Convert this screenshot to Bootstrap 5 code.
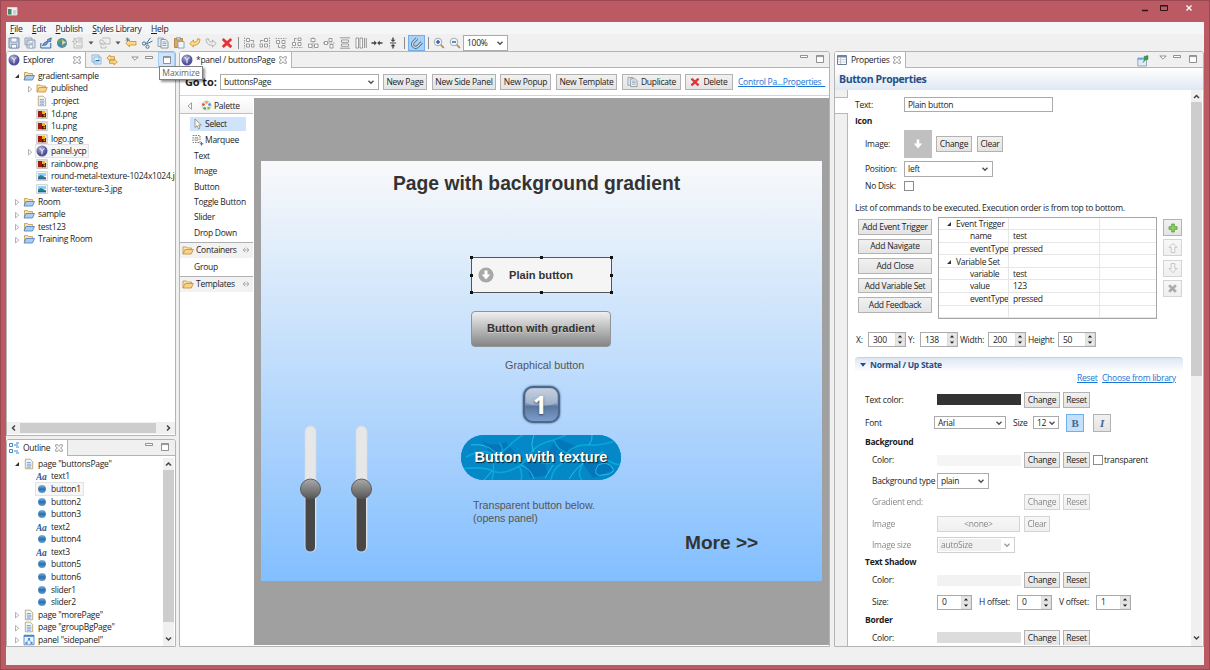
<!DOCTYPE html>
<html lang="en">
<head>
<meta charset="utf-8">
<title>Panel editor</title>
<link rel="stylesheet" href="https://cdn.jsdelivr.net/npm/bootstrap@5.3.0/dist/css/bootstrap.min.css">
<style>
body{width:1210px;height:670px;overflow:hidden;background:#bc5a64;font:8.5px/12px "Open Sans","Noto Sans",sans-serif;letter-spacing:-.26px;color:#1c1c1c;white-space:nowrap}
svg{display:block;flex:none}
.ic{width:12px;height:12px}
.win{width:1210px;height:670px;border:1px solid #9a4852;padding:0 5px 4px}
.titlebar{height:21px}
.menubar{height:12px;background:#f5f6f7;padding:1px 0 0 4px}
.menubar span{margin-right:9.5px}
.menubar u,.lnk{text-underline-offset:1px}
.tools{height:17px;background:#f0f0f0}
.tools .tb{width:16px;height:16px;display:flex;align-items:center;justify-content:center}
.tools .dd{width:10px;display:flex;justify-content:center}
.tools .sep{width:6px;height:12px;display:flex;justify-content:center}
.tools .sep::before{content:"";width:1px;background:#8c8c8c}
.tools .pressed{width:17px;background:#a9d0f5;border:1px solid #74aee6}
.gap1{width:1px}
.dim{opacity:.75}
.main-area{background:#f0f0f0;height:614px}
.leftcol{width:170px;margin-right:3px;flex:none}
.pane{background:#fff;border:1px solid #b4b4b4;border-radius:3px 3px 0 0;overflow:hidden;flex:none}
.explorer{height:385px;margin-bottom:3px}
.outline-pane{height:208px}
.editor{width:651px;height:596px;margin-right:4px}
.props{width:370px;height:596px}
.tabs{height:16px;background:#f0f0f0;border-bottom:1px solid #b4b4b4}
.tabon{height:16px;background:#fff;border-right:1px solid #b4b4b4;padding:0 4px 0 1px}
.w-exp{width:79px}.w-out{width:61px}.w-ed{width:112px}.w-pr{width:71px}
.hot{width:17px;height:16px;background:#cfe4fa;border:1px solid #a5cdf2}
.treearea{height:354px;padding-top:1.5px}
.treerow{height:12.58px;display:flex;align-items:center}
.treerow>.tw{width:8px;margin:1px 2.5px 0 5.5px;flex:none}
.treerow .ic{margin-right:3px}
.lv1{padding-left:13px}
.treerow .cur{background:#f6f6f6;outline:1px solid #e4e4e4;display:flex;align-items:center;height:12px;padding-right:2px}
.hsb{height:12px;background:#f0f0f0}
.hthumb{width:136px;height:10px;background:#cdcdcd}
.vsb{width:11px;background:#f0f0f0}
.vthumb{width:11px;background:#cdcdcd}
.ot{height:152px}.pt{height:274px}
.btnx{background:linear-gradient(#f1f1f1,#e4e4e4);border:1px solid #b2b2b2;display:flex;align-items:center;justify-content:center;height:16px;line-height:12px;flex:none}
.off{opacity:.55}
.fld{background:#fff;border:1px solid #ababab;height:16px;display:flex;align-items:center;padding:0 3px}
.lnk{color:#1a74d4;text-decoration:underline}
.gotorow{height:28px;border-bottom:1px solid #d4d4d4;padding-left:5px}
.goto{width:35px;font:bold 11px/14px "Open Sans",sans-serif;letter-spacing:-.1px}
.palette{width:73px;margin-top:2px}
.palhead{height:16px;border-bottom:1px solid #c0c0c0;background:linear-gradient(#fff,#f2f2f2)}
.palitem{height:15.45px;padding-left:14px;display:flex;align-items:center}
.palsel{height:14px;width:56px;margin:3px 0 1px 10px;background:#cfe3fa}
.drawer{height:16px;border-top:1px solid #b0b0b0;background:#f2f2f2;padding:0 3px 0 2px}
.canvas{width:575px;height:547px;margin:2px 0 0 1px;background:#a0a0a0;padding:63px 7px}
.sheet{position:relative;width:561px;height:420px;background:linear-gradient(#f9f9fa 0,#d3e7fb 32%,#a9d1fd 68%,#82bfff);color:#333;font-family:"Liberation Sans",sans-serif;letter-spacing:0}
.sheet>*{position:absolute}
.s-title{left:132px;top:11px;font:bold 19.3px/24px "Liberation Sans",sans-serif}
.s-plain{left:210px;top:96px;width:141px;height:36px;background:#f5f5f5;border:1px solid #555}
.s-handles{left:207px;top:93px}
.s-plabel{left:248px;top:107px}
.blabel{font:bold 11.1px/14px "Liberation Sans",sans-serif}
.s-grad{left:210px;top:150px;width:140px;height:36px;border:1px solid #8f9499;border-radius:4px;background:linear-gradient(#efefef,#858585);text-shadow:0 1px #ccc;padding-bottom:2px}
.s-cap{left:244px;top:198px;font-size:10.8px;line-height:13px;color:#555}
.s-one{left:261px;top:224px;width:39px;height:39px}
.s-one svg{filter:drop-shadow(0 0 1px #40587c)}
.s-one b{position:absolute;inset:0;font:bold 25px/38px "Noto Sans",sans-serif;color:#fff;text-align:center;left:-3px;text-shadow:0 1px 2px #345}
.s-tex{left:200px;top:274px;width:160px;height:45px;border-radius:23px;overflow:hidden;background:#0788c6}
.s-tex span{position:absolute;left:0;right:0;top:14px;text-align:center;font:bold 14.6px/17px "Liberation Sans",sans-serif;color:#fff;text-shadow:1px 1px 1px #023}
.s-note{left:212px;top:338px;font-size:10.7px;line-height:12.7px;color:#555;letter-spacing:-.05px}
.s-more{left:424px;top:370px;font:bold 19.1px/24px "Liberation Sans",sans-serif}
.s-sl{left:38px;top:264px}
.ptitle{height:22px;background:linear-gradient(#fff,#dfe8f3);color:#1f4f85;font:bold 10.5px/23px "Open Sans",sans-serif;letter-spacing:-.38px;padding-left:4px}
.formwrap{height:556px}
.sidetab{width:13px;background:#f0f0f0;border-right:1px solid #b8b8b8}
.sidetab div{height:17px;margin:7px -1px 0 0;background:#fff;border:solid #b8b8b8;border-width:1px 0}
.form-area{display:grid;width:343px;height:555px;overflow:hidden;padding-top:6px;grid-template-rows:17px 16px 29px 22px 12px 25px 102px 38px 14px 13px 31px 15px 23px 14px 28px 14px 29px 13px 22px 14px 30px 5px 31px}
.f{display:grid;align-items:center;align-content:center;padding-left:7px;min-height:0}
.g-text{grid-template-columns:49px 149px}
.g-text .fld,.spin{height:15px}
.g-img{grid-template-columns:39px 28px 4px 36px 5px 26px;padding-left:17px}
.g-img .thumb{height:28px;background:#c0c0c0;display:flex;align-items:center;justify-content:center}
.g-pos{grid-template-columns:39px 89px;padding-left:17px}
.g-list{padding-top:7px}
.chk{width:10px;height:10px;border:1px solid #8c8c8c;background:#fff}
.g-cmd{grid-template-columns:74px 6px 219px 6px 19px;align-items:start;align-content:start;padding-left:10px}
.cmdbtn{margin:2px 0 4px;height:15.6px}
.cmdtable{height:102px;border:1px solid #a6a6a6;overflow:hidden;margin-top:-.5px}
.cmdline{display:grid;grid-template-columns:70px 91px 1fr;height:12.6px;border-bottom:1px solid #e6e6e6;align-items:center}
.cmdline>*{border-right:1px solid #e6e6e6;height:12.6px;padding-left:4px;overflow:hidden}
.cmdline>*:first-child{padding-left:31px}
.cmdline>.grp:first-child{display:flex;align-items:center;padding-left:6px;gap:3px}
.sq{width:19px;height:17px;margin:2px 0 3.3px}
.g-xy{grid-template-columns:12px 38px 2px 12px 38px 2px 28px 38px 2px 30px 38px;padding:3px 0 0 8px}
.spin{background:#fff;border:1px solid #ababab;display:flex;align-items:center;justify-content:space-between;padding-left:4px}
.sect{background:linear-gradient(#dce7f4,#fcfdff);border-top:1px solid #c0d2e6;color:#1f4f85;font-weight:bold;border-radius:4px 4px 0 0;width:328px;margin-left:7px;padding-left:5px;display:flex;align-items:center;gap:4px}
.g-lnk{grid-template-columns:21px 80px;gap:4px;padding-left:229px}
.g-c{grid-template-columns:72px 84px 3px 36px 3px 27px 3px 11px 60px;padding-left:17px}
.g-c.ind{grid-template-columns:65px 84px 3px 36px 3px 27px 3px 11px 60px;padding-left:24px}
.sw{height:11px}
.sw-text{background:#333}.sw-bg{background:#f5f5f5}.sw-sh{background:#f2f2f2}.sw-bd{background:#dcdcdc}
.g-font{grid-template-columns:69px 72px 7px 20px 26px 7px 18px 9px 18px;padding-left:17px}
.g-font .fld{height:13px;padding-right:2px}
.g-type{grid-template-columns:65px 52px;padding-left:24px}
.g-i{grid-template-columns:65px 83px 4px 26px;padding-left:24px}
.g-size{grid-template-columns:65px 78px;padding-left:24px}
.auto{background:#e4e4e4;width:62px;margin-left:-2px;padding-left:2px}
.g-sp{grid-template-columns:65px 35px 7px 38px 35px 7px 37px 35px;padding-left:24px}
.bi{height:18px;font:bold 11px/16px "Liberation Serif",serif;color:#44658f}
.bi.on{background:#c4e0fb;border-color:#6fb0ee}
.pl17{padding-left:17px}
.tip{position:absolute;left:159px;top:66px;width:44px;height:14px;background:#fff;border:1px solid #808080;box-shadow:2px 2px 2px #0006;color:#666;text-align:center;letter-spacing:-.05px}
b{font-weight:bold}
</style>
<script src="https://cdn.jsdelivr.net/npm/bootstrap@5.3.0/dist/js/bootstrap.bundle.min.js"></script>
</head>
<body>
<svg width="0" height="0" class="position-absolute">
<defs>
<linearGradient id="gb" x2="0" y2="1"><stop stop-color="#7fb5df"/><stop offset=".5" stop-color="#2b6eaa"/><stop offset="1" stop-color="#5f9fd4"/></linearGradient>
<radialGradient id="gy" cx=".4" cy=".3"><stop stop-color="#b5b6de"/><stop offset="1" stop-color="#50539b"/></radialGradient>
<linearGradient id="gk" x2="0" y2="1"><stop stop-color="#aaa"/><stop offset="1" stop-color="#555"/></linearGradient>
<linearGradient id="g1" x2="0" y2="1"><stop stop-color="#b9c6d8"/><stop offset=".5" stop-color="#7e97b8"/><stop offset=".55" stop-color="#5b769c"/><stop offset="1" stop-color="#7ea0d0"/></linearGradient>
<symbol id="yi" viewBox="0 0 12 12"><circle cx="6" cy="6" r="5.500" fill="url(#gy)"/><path d="M3.700 3.200 6 5.800 8.300 3.200M6 5.800V9.300" stroke="#fff" stroke-width="1" fill="none"/></symbol>
<symbol id="prj" viewBox="0 0 12 12"><path d="M1.500 9V2.500h3l1 1h4V5" fill="#f7e2a6" stroke="#b58a3c" stroke-width=".7"/><path d="M1 10 3 5.500h8.500L9.500 10z" fill="#a9cdf5" stroke="#4979bb" stroke-width=".8"/></symbol>
<symbol id="fold" viewBox="0 0 12 12"><path d="M1 10V3h3.500l1 1h4v1.500" fill="#fbe7b4" stroke="#c28e39" stroke-width=".8"/><path d="M1 10 3 5.500h8.300L9.300 10z" fill="#f9d283" stroke="#c28e39" stroke-width=".8"/></symbol>
<symbol id="doc" viewBox="0 0 12 12"><path d="M2.300 1.200h5l2.400 2.400v7.200H2.300z" fill="#eef4fc" stroke="#b09d6a" stroke-width=".8"/><path d="M3.800 4.500h4M3.800 6.200h4.500M3.800 7.800h4.500M3.800 9.300h4" stroke="#7393c4" stroke-width=".8"/></symbol>
<symbol id="png" viewBox="0 0 12 12"><path d="M.7 1.700h10.600v8.800H.7z" fill="#e9e3da" stroke="#aaa" stroke-width=".6"/><path d="M2 3h5v6.300H2z" fill="#9c1a10"/><path d="M6 5h4v4.300H6z" fill="#4c1206"/><path d="M6 3h3v3H6z" fill="#f0b322"/><path d="M7.500 6.500h1.800v1.800H7.500z" fill="#e8871c"/></symbol>
<symbol id="jpg" viewBox="0 0 12 12"><path d="M.7 1.700h10.600v8.800H.7z" fill="#fff" stroke="#aaa" stroke-width=".6"/><path d="M2 3h8v3H2z" fill="#8fd3f3"/><path d="M2 6.500 5 5l5 2.500v1.800H2z" fill="#2f7c8f"/><path d="M2 8h8v1.300H2z" fill="#2b62a5"/></symbol>
<symbol id="ball" viewBox="0 0 12 12"><circle cx="6" cy="6" r="3.900" fill="url(#gb)"/></symbol>
<symbol id="aa" viewBox="0 0 12 12"><text x="0" y="9.500" font-family="Liberation Serif" font-style="italic" font-weight="bold" font-size="9.500" fill="#2c5c9c">Aa</text></symbol>
<symbol id="pnl" viewBox="0 0 12 12"><path d="M1 1.200h10v9.600H1z" fill="#e9f3fd" stroke="#3f7dbd" stroke-width=".8"/><path d="M1 1h10v1.800H1z" fill="#3f86cc"/><path d="M5 4h2v2H5zM2.500 8h2v2h-2zM7.500 8h2v2h-2z" fill="#4b8bcb"/><path d="M6 6 3.500 8M6 6l2.500 2" stroke="#4b8bcb" stroke-width=".7"/></symbol>
<symbol id="open" viewBox="0 0 8 8"><path d="M6 2v4H2z" fill="#333"/></symbol>
<symbol id="shut" viewBox="0 0 8 8"><path d="M2.500 1.500v5.500L5.800 4.200z" fill="#fff" stroke="#a0a0a0" stroke-width=".8"/></symbol>
<symbol id="cls" viewBox="0 0 8 8"><path d="M.7.700h2L4 2.400 5.300.700h2v2L5.600 4l1.700 1.300v2h-2L4 5.600 2.700 7.300h-2v-2L2.400 4 .7 2.700z" fill="#fff" stroke="#777" stroke-width=".7"/></symbol>
<symbol id="mn" viewBox="0 0 8 8"><path d="M.5.500h7v2h-7z" fill="#fff" stroke="#777" stroke-width=".8"/></symbol>
<symbol id="mx" viewBox="0 0 8 8"><path d="M.5.500h7v7h-7zM.5 1.600h7" fill="#fff" stroke="#777" stroke-width=".8"/></symbol>
<symbol id="mv" viewBox="0 0 8 8"><path d="M.8 1h6.400L4 4.200z" fill="#fff" stroke="#777" stroke-width=".8"/></symbol>
<symbol id="cv" viewBox="0 0 8 8"><path d="M1.500 2.700 4 5.200 6.500 2.700" fill="none" stroke="#505050" stroke-width="1.400"/></symbol>
<symbol id="del" viewBox="0 0 12 12"><path d="M2.500 1 6 4 9.500 1 11.200 3 8 6l3.200 3-1.800 2.200L6 8.200 2.600 11 .8 9 4 6 .8 3z" fill="#e0353a"/></symbol>
<symbol id="cpy" viewBox="0 0 12 12"><path d="M1 1h5.500v8.500H1z" fill="#dbe8f7" stroke="#8295ab" stroke-width=".8"/><path d="M4 2.500h4.800L11 4.700V11H4z" fill="#eef5fd" stroke="#8a8f79" stroke-width=".9"/><path d="M5.500 5h4M5.500 6.700h4M5.500 8.500h4" stroke="#6c94c8" stroke-width=".8"/></symbol>
<symbol id="spn" viewBox="0 0 10 13"><path d="M0 0h10v6H0zM0 7h10v6H0z" fill="#e8e8e8" stroke="#c0c0c0" stroke-width=".5"/><path d="M2.800 4.400h4.400L5 2.200zM2.800 8.600h4.400L5 10.800z" fill="#222"/></symbol>
<symbol id="al" viewBox="0 0 12 12"><g fill="#fff" stroke="#8e8e8e" stroke-width=".9"><path d="M1.500.5v11" stroke-dasharray="1.500 1"/><path d="M3.500 1.500h3v3h-3zM3.500 7h3v3h-3zM8.500 7h2.500v3H8.500z"/><path d="M7.500 3.500h3v2" fill="none"/></g></symbol>
<symbol id="pin" viewBox="0 0 12 12"><path d="M.8 3h8.700v8H.8z" fill="#dcecf9" stroke="#8a969f" stroke-width=".8"/><path d="M.8 3h8v1.800h-8z" fill="#69a7dc"/><path d="M7 1.500 11 .5v4L9 4.500 6 7.500 7.800 4z" fill="#33a047" stroke="#1c7131" stroke-width=".4"/></symbol>
<symbol id="ua" viewBox="0 0 12 12"><path d="M6 1.300 10 5.500H7.800v5H4.200v-5H2z" fill="#eee" stroke="#999"/></symbol>
<symbol id="undo" viewBox="0 0 12 12"><path d="M.8 6.500 4.500 3v2c2.500.5 3.700-.5 4-3.300l2.500.6C10.700 6.500 8.500 8.400 4.500 8.200V10z" fill="#fbdc8a" stroke="#cf9530" stroke-width=".9"/></symbol>
<symbol id="lens" viewBox="0 0 12 12"><path d="m7.500 7.500 3.300 3.300" stroke="#b88a3f" stroke-width="1.700"/><circle cx="5" cy="5" r="3.800" fill="#edf4fd" stroke="#aaa"/><path d="M3 5h4" stroke="#254e9f" stroke-width="1.300"/></symbol>
<symbol id="pinup" viewBox="0 0 8 6"><path d="M3.300.8 1 3l2.300 2.200M4.700.8 7 3 4.700 5.200M2 3h4" fill="none" stroke="#999" stroke-width=".8"/></symbol>
<symbol id="dn" viewBox="0 0 6 4"><path d="M.5.500h5L3 3.500z" fill="#555"/></symbol>
</defs></svg>

<div class="win">
<div class="titlebar d-flex justify-content-between">
<svg width="12" height="20" viewBox="0 0 12 20"><path d="M1.500 6.500h9.500v7.500H1.500z" fill="#eef1ee" stroke="#d6d6d6"/><path d="M2 8h3.500v5.500H2z" fill="#3f8a6c"/><path d="M7 9h3v4H7z" fill="#c6cfdc"/></svg>
<svg width="66" height="20" viewBox="0 0 66 20" fill="none" stroke="#2c1518"><path d="M4 9.500h6" stroke-width="1.500"/><path d="M22.500 4.500h7v5h-7zM22.500 5h7"/><path d="m48.500 4.500 5 5m0-5-5 5" stroke="#fff" stroke-width="1.300"/></svg>
</div>
<nav class="menubar d-flex align-items-center"><span><u>F</u>ile</span><span><u>E</u>dit</span><span><u>P</u>ublish</span><span><u>S</u>tyles Library</span><span><u>H</u>elp</span></nav>
<div class="tools d-flex align-items-center">
<div class="tb"><svg class="ic" viewBox="0 0 12 12"><path d="M1 1h10v10H1z" fill="#c2d3e8" stroke="#7489a8"/><path d="M3 1h6v4H3zM3.500 7.500h5V11h-5z" fill="#f5f8fc" stroke="#7489a8" stroke-width=".7"/></svg></div>
<div class="tb dim"><svg class="ic" viewBox="0 0 12 12"><path d="M1 1h7v7H1zM3 3h8v8H3z" fill="#cfdeee" stroke="#7489a8"/><path d="M5 3.500h4v2.500H5zM5.500 8h3v3h-3z" fill="#fff" stroke="#7489a8" stroke-width=".6"/></svg></div>
<div class="tb"><svg class="ic" viewBox="0 0 12 12"><path d="M.8 6v5h10V6" fill="#dce9f7" stroke="#41699d"/><path d="M2.500 8.500c1-3 3-4 5-4V2.500L11.300.8 10.500 5 9 4.200 6 8z" fill="#6b9bd0" stroke="#2f5c97" stroke-width=".7"/></svg></div>
<div class="tb"><svg class="ic" viewBox="0 0 12 12"><circle cx="6" cy="6" r="5" fill="#4c88b4"/><path d="M2 3c2-2 5-1 4 1S2 6 1.500 5zM6 8c2-2 4 0 3 1s-3 1-3-1z" fill="#5fa556"/><path d="M6.500 2 8 4.500l2.600.4L8.300 6.500 6 8z" fill="#f3dc86"/></svg></div>
<div class="tb dim"><svg class="ic" viewBox="0 0 12 12" fill="#eee" stroke="#999" stroke-width=".8"><path d="M5 1h5v10H2V7M6 3h3M6 5h3M4 9h5"/><path d="M2 1.500h2v3h1.500L3 7.200.5 4.500H2z"/></svg></div>
<div class="dd"><svg width="6" height="4"><use href="#dn"/></svg></div><span class="gap1"></span>
<div class="tb dim"><svg class="ic" viewBox="0 0 12 12" fill="#eee" stroke="#999" stroke-width=".8"><path d="M3 1h8v6H5M2 5v6h5V9"/><path d="M1 3h3v1.500L6.500 6 4 8V6.500H1z"/></svg></div>
<div class="dd"><svg width="6" height="4"><use href="#dn"/></svg></div>
<div class="tb"><svg class="ic" viewBox="0 0 12 12"><path d="M.8 6 4.500 2.500v2H11v3.500H4.500v2z" fill="#fbdc8a" stroke="#cf9530" stroke-width=".9"/><path d="M2.500.5v4M.7 1.500l3.600 2M4.300 1.500.7 3.500" stroke="#4b75a8" stroke-width=".8"/></svg></div>
<div class="tb"><svg class="ic" viewBox="0 0 12 12" fill="none" stroke="#43719f"><path d="M9.500.8 4.500 7.500M11.500 4 5.500 7"/><circle cx="3" cy="6.500" r="1.600"/><circle cx="6.500" cy="9.700" r="1.600"/></svg></div>
<div class="tb"><svg class="ic"><use href="#cpy"/></svg></div>
<div class="tb"><svg class="ic" viewBox="0 0 12 12"><path d="M1.500 1.500h8v9h-8z" fill="#d9aa5d" stroke="#a87a38" stroke-width=".8"/><path d="M3.500.6h4V3h-4z" fill="#ccc" stroke="#888" stroke-width=".6"/><path d="M5 4.500h6V11H5z" fill="#eef5fd" stroke="#7c95b5" stroke-width=".8"/></svg></div>
<div class="tb"><svg class="ic"><use href="#undo"/></svg></div>
<div class="tb"><svg class="ic" viewBox="0 0 12 12"><path d="M11.200 6.500 7.500 3v2C5 5.500 3.800 4.500 3.500 1.700L1 2.300c.3 4.200 2.500 6.100 6.500 5.900V10z" fill="#eee" stroke="#aaa" stroke-width=".9"/></svg></div>
<div class="tb"><svg class="ic"><use href="#del"/></svg></div>
<div class="sep"></div>
<div class="tb"><svg class="ic"><use href="#al"/></svg></div>
<div class="tb"><svg class="ic" viewBox="0 0 12 12"><use href="#al" transform="matrix(-1 0 0 1 12 0)" width="12" height="12"/></svg></div>
<div class="tb"><svg class="ic" viewBox="0 0 12 12"><use href="#al" transform="matrix(0 1 1 0 0 0)" width="12" height="12"/></svg></div>
<div class="tb"><svg class="ic" viewBox="0 0 12 12"><use href="#al" transform="matrix(0 -1 1 0 0 12)" width="12" height="12"/></svg></div>
<div class="tb"><svg class="ic" viewBox="0 0 12 12" fill="#fff" stroke="#8e8e8e" stroke-width=".9"><path d="M6 .5v11" stroke-dasharray="1.500 1"/><path d="M4 1.500h4v3H4zM1.500 7h3.500v3.500H1.500zM7.500 7H11v3.500H7.500z"/></svg></div>
<div class="tb"><svg class="ic" viewBox="0 0 12 12" fill="#fff" stroke="#8e8e8e" stroke-width=".9"><path d="M0 6h12" stroke-dasharray="1.500 1"/><path d="M1.500 4.500h3v3h-3zM6 1.500h3v3H6zM7 7.500h3V11H7z"/></svg></div>
<div class="tb"><svg class="ic" viewBox="0 0 12 12" fill="#fff" stroke="#8e8e8e" stroke-width=".9"><path d="M1 .8h10M1 11.200h10M2.500 3h7v2.300h-7zM2.500 7h7v2.300h-7z"/></svg></div>
<div class="tb"><svg class="ic" viewBox="0 0 12 12" fill="#fff" stroke="#8e8e8e" stroke-width=".9"><path d="M1 1h2.500v10H1zM5 1h2.500v10H5zM9.500 1v10M11.300 1v10"/></svg></div>
<div class="tb"><svg class="ic" viewBox="0 0 12 12"><path d="M.5 5.300h2.700V3.500L5.800 6 3.200 8.500V6.700H.5zM11.500 5.300H8.800V3.500L6.200 6l2.600 2.500V6.700h2.700z" fill="#444"/></svg></div>
<div class="tb"><svg class="ic" viewBox="0 0 12 12"><path d="M5.300.5v2.200H3.500L6 5l2.500-2.300H6.700V.5zM5.300 11.500V9.300H3.500L6 7l2.500 2.300H6.700v2.200zM3 5.600h6v.8H3z" fill="#444"/></svg></div>
<div class="sep"></div><span class="gap1"></span>
<div class="tb pressed"><svg class="ic" viewBox="0 0 12 12" fill="none"><path d="M6 1.500 2.500 5C-.5 8.500 4 12 7 9.200L10.800 5.400" stroke="#526b87" stroke-width="3"/><path d="M6 1.500 2.500 5C-.5 8.500 4 12 7 9.200L10.800 5.400" stroke="#cfe0f1" stroke-width="1.200"/></svg></div>
<div class="sep"></div>
<div class="tb"><svg class="ic" viewBox="0 0 12 12"><use href="#lens"/><path d="M5 3v4" stroke="#254e9f" stroke-width="1.300"/></svg></div>
<div class="tb"><svg class="ic"><use href="#lens"/></svg></div>
<div class="fld justify-content-between" style="width:45px"><span>100%</span><svg width="8" height="8"><use href="#cv"/></svg></div>
</div>

<div class="main-area d-flex">
<div class="leftcol">
<section class="pane explorer">
<div class="tabs d-flex">
<div class="tabon w-exp d-flex align-items-center"><svg class="ic" style="margin-right:3px"><use href="#yi"/></svg><span>Explorer</span><svg class="ms-auto" width="8" height="8"><use href="#cls"/></svg></div>
<div class="d-flex align-items-center ms-auto">
<svg width="11" height="11" viewBox="0 0 11 11"><path d="M1 1h7v7H1zM3 3h7v7H3z" fill="#e3f1fb" stroke="#8bb9d8"/><path d="M4.500 6.500h4" stroke="#2b6eaa"/></svg>
<svg width="12" height="12" viewBox="0 0 12 12" style="margin:0 13px 0 4px"><path d="M.8 4 4 1v1.700h4.500v2.600H4V7zM11.300 8 8 5v1.700H3.500v2.600H8V11z" fill="#fbdc8a" stroke="#c88c28" stroke-width=".8"/></svg>
<svg width="8" height="8"><use href="#mv"/></svg><svg width="8" height="8" style="margin:0 5px 0 6px"><use href="#mn"/></svg>
<div class="hot d-flex align-items-center justify-content-center"><svg width="8" height="8"><use href="#mx"/></svg></div>
</div></div>
<div class="treearea overflow-hidden">
<div class="treerow"><svg class="tw" height="8"><use href="#open"/></svg><svg class="ic"><use href="#prj"/></svg>gradient-sample</div>
<div class="treerow lv1"><svg class="tw" height="8"><use href="#shut"/></svg><svg class="ic"><use href="#fold"/></svg>published</div>
<div class="treerow lv1"><span class="tw"></span><svg class="ic"><use href="#doc"/></svg>.project</div>
<div class="treerow lv1"><span class="tw"></span><svg class="ic"><use href="#png"/></svg>1d.png</div>
<div class="treerow lv1"><span class="tw"></span><svg class="ic"><use href="#png"/></svg>1u.png</div>
<div class="treerow lv1"><span class="tw"></span><svg class="ic"><use href="#png"/></svg>logo.png</div>
<div class="treerow lv1"><svg class="tw" height="8"><use href="#shut"/></svg><div class="cur"><svg class="ic"><use href="#yi"/></svg>panel.ycp</div></div>
<div class="treerow lv1"><span class="tw"></span><svg class="ic"><use href="#png"/></svg>rainbow.png</div>
<div class="treerow lv1"><span class="tw"></span><svg class="ic"><use href="#jpg"/></svg>round-metal-texture-1024x1024.jpg</div>
<div class="treerow lv1"><span class="tw"></span><svg class="ic"><use href="#jpg"/></svg>water-texture-3.jpg</div>
<div class="treerow"><svg class="tw" height="8"><use href="#shut"/></svg><svg class="ic"><use href="#prj"/></svg>Room</div>
<div class="treerow"><svg class="tw" height="8"><use href="#shut"/></svg><svg class="ic"><use href="#prj"/></svg>sample</div>
<div class="treerow"><svg class="tw" height="8"><use href="#shut"/></svg><svg class="ic"><use href="#prj"/></svg>test123</div>
<div class="treerow"><svg class="tw" height="8"><use href="#shut"/></svg><svg class="ic"><use href="#prj"/></svg>Training Room</div>
</div>
<div class="hsb d-flex align-items-center"><svg width="13" height="8" viewBox="0 0 13 8"><path d="M8 1.500 5.500 4 8 6.500" fill="none" stroke="#444" stroke-width="1.500"/></svg><div class="hthumb"></div><svg class="ms-auto" width="13" height="8" viewBox="0 0 13 8"><path d="M5 1.500 7.500 4 5 6.500" fill="none" stroke="#444" stroke-width="1.500"/></svg></div>
</section>
<section class="pane outline-pane">
<div class="tabs d-flex">
<div class="tabon w-out d-flex align-items-center"><svg class="ic" style="margin-right:3px" viewBox="0 0 12 12" fill="none" stroke="#3f86c4"><path d="M1.500 1.500h3v3h-3zM1.500 7.500h3v3h-3zM6 3h4M6 9h4M8 5h3M8 11h3M8 1h3"/></svg><span>Outline</span><svg class="ms-auto" width="8" height="8"><use href="#cls"/></svg></div>
<div class="d-flex ms-auto" style="padding-top:3px"><svg width="8" height="8"><use href="#mn"/></svg><svg width="8" height="8" style="margin:0 6px 0 8px"><use href="#mx"/></svg></div>
</div>
<div class="d-flex justify-content-between" style="height:190px;padding-top:1.5px">
<div>
<div class="treerow"><svg class="tw" height="8"><use href="#open"/></svg><svg class="ic"><use href="#doc"/></svg>page "buttonsPage"</div>
<div class="treerow lv1"><span class="tw"></span><svg class="ic"><use href="#aa"/></svg>text1</div>
<div class="treerow lv1"><span class="tw"></span><div class="cur"><svg class="ic"><use href="#ball"/></svg>button1</div></div>
<div class="treerow lv1"><span class="tw"></span><svg class="ic"><use href="#ball"/></svg>button2</div>
<div class="treerow lv1"><span class="tw"></span><svg class="ic"><use href="#ball"/></svg>button3</div>
<div class="treerow lv1"><span class="tw"></span><svg class="ic"><use href="#aa"/></svg>text2</div>
<div class="treerow lv1"><span class="tw"></span><svg class="ic"><use href="#ball"/></svg>button4</div>
<div class="treerow lv1"><span class="tw"></span><svg class="ic"><use href="#aa"/></svg>text3</div>
<div class="treerow lv1"><span class="tw"></span><svg class="ic"><use href="#ball"/></svg>button5</div>
<div class="treerow lv1"><span class="tw"></span><svg class="ic"><use href="#ball"/></svg>button6</div>
<div class="treerow lv1"><span class="tw"></span><svg class="ic"><use href="#ball"/></svg>slider1</div>
<div class="treerow lv1"><span class="tw"></span><svg class="ic"><use href="#ball"/></svg>slider2</div>
<div class="treerow"><svg class="tw" height="8"><use href="#shut"/></svg><svg class="ic"><use href="#doc"/></svg>page "morePage"</div>
<div class="treerow"><svg class="tw" height="8"><use href="#shut"/></svg><svg class="ic"><use href="#doc"/></svg>page "groupBgPage"</div>
<div class="treerow"><svg class="tw" height="8"><use href="#shut"/></svg><svg class="ic"><use href="#pnl"/></svg>panel "sidepanel"</div>
</div>
<div class="vsb" style="margin-right:1px"><svg width="11" height="12" viewBox="0 0 11 12"><path d="M3 7.500 5.500 5 8 7.500" fill="none" stroke="#444" stroke-width="1.500"/></svg><div class="vthumb ot"></div><svg width="11" height="24" viewBox="0 0 11 24"><path d="M3 15.500 5.500 18 8 15.500" fill="none" stroke="#444" stroke-width="1.500"/></svg></div>
</div>
</section>
</div>

<section class="pane editor">
<div class="tabs d-flex">
<div class="tabon w-ed d-flex align-items-center"><svg class="ic" style="margin-right:3px"><use href="#yi"/></svg><span>*panel / buttonsPage</span><svg class="ms-auto" width="8" height="8"><use href="#cls"/></svg></div>
<div class="d-flex ms-auto" style="padding-top:3px"><svg width="8" height="8"><use href="#mn"/></svg><svg width="8" height="8" style="margin:0 5px 0 8px"><use href="#mx"/></svg></div>
</div>
<div class="gotorow d-flex align-items-center">
<div class="goto">Go to:</div>
<div class="fld justify-content-between" style="width:159px"><span>buttonsPage</span><svg width="8" height="8"><use href="#cv"/></svg></div>
<div class="btnx" style="width:44px;margin-left:4px">New Page</div>
<div class="btnx" style="width:64px;margin-left:5px">New Side Panel</div>
<div class="btnx" style="width:51px;margin-left:4px">New Popup</div>
<div class="btnx" style="width:61px;margin-left:5px">New Template</div>
<div class="btnx" style="width:59px;margin-left:5px"><svg class="ic" style="width:11px;margin-right:3px"><use href="#cpy"/></svg>Duplicate</div>
<div class="btnx" style="width:48px;margin-left:4px"><svg style="margin-right:3px" width="10" height="10"><use href="#del"/></svg>Delete</div>
<a class="lnk" style="margin-left:5px">Control Pa...Properties&nbsp;&nbsp;</a>
</div>
<div class="d-flex">
<div class="palette">
<div class="palhead d-flex align-items-center"><svg width="6" height="8" viewBox="0 0 6 8" style="margin:0 8px 0 7px"><path d="M4.500.8v6.400L1 4z" fill="#fff" stroke="#777" stroke-width=".7"/></svg><svg viewBox="0 0 12 12" width="11" height="11"><circle cx="6" cy="6" r="5" fill="#efefef" stroke="#ccc"/><circle cx="6" cy="2.600" r="1.500" fill="#efa12c"/><circle cx="9.300" cy="5" r="1.500" fill="#4b94d8"/><circle cx="8.300" cy="8.800" r="1.500" fill="#8bbf3d"/><circle cx="4" cy="9" r="1.500" fill="#54ab4c"/><circle cx="2.700" cy="5" r="1.500" fill="#dd553e"/></svg><span style="margin-left:2px">Palette</span></div>
<div class="palsel d-flex align-items-center"><svg width="10" height="12" viewBox="0 0 10 12" style="margin:0 2px 0 3px"><path d="M2 1v8.500L4 7.700l1.500 3.200 1.500-.7L5.600 7h2.700z" fill="#fffbe0" stroke="#777" stroke-width=".7"/></svg>Select</div>
<div class="palitem" style="padding-left:12px;height:16px"><svg class="ic" viewBox="0 0 12 12" style="margin-right:1px"><path d="M1 1.500h7v7H1z" fill="none" stroke="#777" stroke-dasharray="1.500 1"/><path d="M3 3.500h3v3H3z" fill="#e5e0b9" stroke="#888" stroke-width=".6"/><path d="M9.500 8v3.500M7.700 9.800h3.600" stroke="#3a6ea5"/></svg>Marquee</div>
<div class="palitem">Text</div><div class="palitem">Image</div><div class="palitem">Button</div><div class="palitem">Toggle Button</div><div class="palitem">Slider</div><div class="palitem">Drop Down</div>
<div class="drawer d-flex align-items-center" style="margin-top:1px"><svg class="ic" style="margin-right:2px"><use href="#fold"/></svg>Containers<svg class="ms-auto" width="8" height="6"><use href="#pinup"/></svg></div>
<div class="palitem" style="height:18px">Group</div>
<div class="drawer d-flex align-items-center"><svg class="ic" style="margin-right:2px"><use href="#fold"/></svg>Templates<svg class="ms-auto" width="8" height="6"><use href="#pinup"/></svg></div>
</div>
<div class="canvas">
<div class="sheet">
<div class="s-title">Page with background gradient</div>
<div class="s-plain"></div>
<svg class="s-handles" width="147" height="42" viewBox="0 0 147 42"><g fill="#111"><path d="M2 2h3v3H2zM72 2h3v3h-3zM142 2h3v3h-3zM2 20h3v3H2zM142 20h3v3h-3zM2 37h3v3H2zM72 37h3v3h-3zM142 37h3v3h-3z"/></g><circle cx="18" cy="21" r="7.600" fill="#a8a8a8"/><path d="M16.500 16.500h3v4h2.800L18 25.500l-4.300-5h2.800z" fill="#fff"/></svg>
<div class="blabel s-plabel">Plain button</div>
<div class="s-grad d-flex align-items-center justify-content-center blabel">Button with gradient</div>
<div class="s-cap">Graphical button</div>
<div class="s-one"><svg width="39" height="39" viewBox="0 0 39 39"><rect x="2" y="2" width="35" height="35" rx="9" fill="url(#g1)" stroke="#4d668c" stroke-width="2"/><path d="M4 18V11q0-7 7-7h17q7 0 7 7v7q-15 6-31 0z" fill="#fff" opacity=".25"/></svg><b>1</b></div>
<div class="s-tex"><svg width="160" height="45" viewBox="0 0 160 45" fill="none"><path d="M0 0h160v45H0z" fill="#0588c8"/><g fill="#046cb0" opacity=".6"><path d="M20 5q12 8 25 2l10 12-18 9zM95 3l20 8-8 14-20-7zM120 26l20-5 12 14-20 8zM63 28l20-3 4 15-17 3z"/></g><g stroke="#08b5df" stroke-width="1.600" opacity=".7"><path d="M5 22q15-8 24-4t22-10Q58 2 62 0M29 18q6 12 2 27M0 34q22-3 32 2t28-6l10-12q5-9 23-13l12-5M58 30q4 8 2 15M93 5q3 10 13 13t17 9q-8 12-2 18M106 18q8-9 22-8t32-6M123 27q13-1 18-11M90 45q2-12 10-16t12-10M66 20q12 10 24 8M141 16q3 12 19 14M38 8q5 4 3 14"/></g><g stroke="#3bdcf2" stroke-width=".8" opacity=".8"><path d="M60 30q10 4 13 14M73 0q-4 10 0 17M123 27q-10 8-15 17M31 36l-8 9M92 30l-8 13M10 10q14-2 24 7M128 10q4-6 3-10M137 30q9-4 14 2t-8 8-6-10z"/></g></svg><span>Button with texture</span></div>
<div class="s-note">Transparent button below.<br>(opens panel)</div>
<div class="s-more">More &gt;&gt;</div>
<svg class="s-sl" width="75" height="128" viewBox="0 0 75 128"><g id="sl"><rect x="6" y="1" width="11" height="126" rx="5.500" fill="#e7e7e7" stroke="#d2dce6" stroke-width=".8"/><path d="M6.500 64h9.500v57.500q0 5-4.700 5t-4.800-5z" fill="#474747"/><circle cx="11.500" cy="64" r="10" fill="url(#gk)" stroke="#555" stroke-width=".9"/></g><use href="#sl" x="51"/></svg>
</div></div>
</div>
</section>

<section class="pane props">
<div class="tabs d-flex">
<div class="tabon w-pr d-flex align-items-center"><svg width="10" height="10" viewBox="0 0 10 10" style="margin:0 4px 0 1px"><path d="M.5.500h9v9h-9z" fill="#fff" stroke="#6e7d94"/><path d="M.5.500h9v2h-9z" fill="#6d86ac"/><path d="M3.500 2v7M1 4.700h8M1 7h8" stroke="#a9b7ca" stroke-width=".7"/></svg><span>Properties</span><svg class="ms-auto" width="8" height="8"><use href="#cls"/></svg></div>
<div class="d-flex ms-auto" style="padding-top:3px"><svg class="ic"><use href="#pin"/></svg><svg width="8" height="8" style="margin:0 6px 0 10px"><use href="#mv"/></svg><svg width="8" height="8"><use href="#mn"/></svg><svg width="8" height="8" style="margin:0 6px 0 8px"><use href="#mx"/></svg></div>
</div>
<div class="ptitle">Button Properties</div>
<div class="formwrap d-flex">
<div class="sidetab"><div></div></div>
<div class="form-area">
<div class="f g-text"><span>Text:</span><span class="fld">Plain button</span></div>
<div class="f"><b>Icon</b></div>
<div class="f g-img"><span>Image:</span><div class="thumb"><svg width="10" height="10" viewBox="0 0 10 10"><path d="M3.700.5h2.600v4h2.900L5 9.500.8 4.500h2.900z" fill="#fff"/></svg></div><i></i><span class="btnx">Change</span><i></i><span class="btnx">Clear</span></div>
<div class="f g-pos"><span>Position:</span><span class="fld justify-content-between">left<svg width="8" height="8"><use href="#cv"/></svg></span></div>
<div class="f g-pos"><span>No Disk:</span><span class="chk"></span></div>
<div class="f g-list">List of commands to be executed. Execution order is from top to bottom.</div>
<div class="f g-cmd">
<div><div class="btnx cmdbtn">Add Event Trigger</div><div class="btnx cmdbtn">Add Navigate</div><div class="btnx cmdbtn">Add Close</div><div class="btnx cmdbtn">Add Variable Set</div><div class="btnx cmdbtn">Add Feedback</div></div><i></i>
<div class="cmdtable">
<div class="cmdline"><div class="grp"><svg width="8" height="8"><use href="#open"/></svg>Event Trigger</div><div></div></div>
<div class="cmdline"><div>name</div><div>test</div></div>
<div class="cmdline"><div>eventType</div><div>pressed</div></div>
<div class="cmdline"><div class="grp"><svg width="8" height="8"><use href="#open"/></svg>Variable Set</div><div></div></div>
<div class="cmdline"><div>variable</div><div>test</div></div>
<div class="cmdline"><div>value</div><div>123</div></div>
<div class="cmdline"><div>eventType</div><div>pressed</div></div>
<div class="cmdline"><div></div><div></div></div>
</div><i></i>
<div>
<div class="btnx sq"><svg width="10" height="10" viewBox="0 0 10 10"><path d="M3.700 1h2.600v2.700H9v2.600H6.300V9H3.700V6.300H1V3.700h2.700z" fill="#8fce62" stroke="#4b9a33" stroke-width=".8"/></svg></div>
<div class="btnx sq off"><svg width="12" height="12"><use href="#ua"/></svg></div>
<div class="btnx sq off"><svg width="12" height="12" viewBox="0 0 12 12"><use href="#ua" transform="rotate(180 6 6)" width="12" height="12"/></svg></div>
<div class="btnx sq off"><svg width="9" height="9" viewBox="0 0 12 12"><path d="M2.500 1 6 4 9.500 1 11.200 3 8 6l3.200 3-1.800 2.200L6 8.200 2.600 11 .8 9 4 6 .8 3z" fill="#666" stroke="#666"/></svg></div>
</div></div>
<div class="f g-xy"><span>X:</span><span class="spin">300<svg width="10" height="13"><use href="#spn"/></svg></span><i></i><span>Y:</span><span class="spin">138<svg width="10" height="13"><use href="#spn"/></svg></span><i></i><span>Width:</span><span class="spin">200<svg width="10" height="13"><use href="#spn"/></svg></span><i></i><span>Height:</span><span class="spin">50<svg width="10" height="13"><use href="#spn"/></svg></span></div>
<div class="sect"><svg width="6" height="4" viewBox="0 0 6 4"><path d="M0 0h6L3 3.700z" fill="#1f4f85"/></svg>Normal / Up State</div>
<div class="f g-lnk"><a class="lnk">Reset</a><a class="lnk">Choose from library</a></div>
<div class="f g-c"><span>Text color:</span><span class="sw sw-text"></span><i></i><span class="btnx">Change</span><i></i><span class="btnx">Reset</span></div>
<div class="f g-font"><span>Font</span><span class="fld justify-content-between">Arial<svg width="8" height="8"><use href="#cv"/></svg></span><i></i><span>Size</span><span class="fld justify-content-between">12<svg width="8" height="8"><use href="#cv"/></svg></span><i></i><span class="btnx bi on">B</span><i></i><span class="btnx bi fst-italic">I</span></div>
<div class="f pl17"><b>Background</b></div>
<div class="f g-c ind"><span>Color:</span><span class="sw sw-bg"></span><i></i><span class="btnx">Change</span><i></i><span class="btnx">Reset</span><i></i><span class="chk"></span><span>transparent</span></div>
<div class="f g-type"><span>Background type</span><span class="fld justify-content-between">plain<svg width="8" height="8"><use href="#cv"/></svg></span></div>
<div class="f g-c ind off"><span>Gradient end:</span><span></span><i></i><span class="btnx">Change</span><i></i><span class="btnx">Reset</span></div>
<div class="f g-i off"><span>Image</span><span class="btnx">&lt;none&gt;</span><i></i><span class="btnx">Clear</span></div>
<div class="f g-size off"><span>Image size</span><span class="fld justify-content-between"><span class="auto">autoSize</span><svg width="8" height="8"><use href="#cv"/></svg></span></div>
<div class="f pl17"><b>Text Shadow</b></div>
<div class="f g-c ind"><span>Color:</span><span class="sw sw-sh"></span><i></i><span class="btnx">Change</span><i></i><span class="btnx">Reset</span></div>
<div class="f g-sp"><span>Size:</span><span class="spin">0<svg width="10" height="13"><use href="#spn"/></svg></span><i></i><span>H offset:</span><span class="spin">0<svg width="10" height="13"><use href="#spn"/></svg></span><i></i><span>V offset:</span><span class="spin">1<svg width="10" height="13"><use href="#spn"/></svg></span></div>
<div class="f pl17"><b>Border</b></div>
<div class="f g-c ind"><span>Color:</span><span class="sw sw-bd"></span><i></i><span class="btnx">Change</span><i></i><span class="btnx">Reset</span></div>
</div>
<div class="vsb"><svg width="11" height="12" viewBox="0 0 11 12"><path d="M3 8 5.500 5.500 8 8" fill="none" stroke="#444" stroke-width="1.500"/></svg><div class="vthumb pt"></div><svg width="11" height="269" viewBox="0 0 11 269"><path d="M3 260.500l2.500 2.500 2.500-2.500" fill="none" stroke="#444" stroke-width="1.500"/></svg></div>
</div>
</section>
</div>
</div>
<div class="tip">Maximize</div>
</body>
</html>
